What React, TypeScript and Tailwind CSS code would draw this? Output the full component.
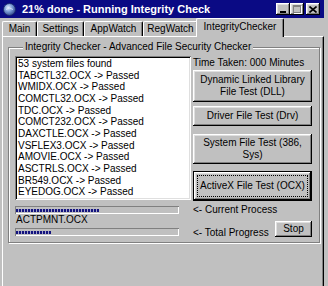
import React from "react";

const raised =
  "shadow-[inset_-1px_-1px_0_#000,inset_1px_1px_0_#fff,inset_-2px_-2px_0_#808080,inset_2px_2px_0_#dfdfdf]";

function TitleIcon() {
  return (
    <svg width="13" height="13" viewBox="0 0 13 13" className="shrink-0">
      <defs>
        <radialGradient id="g" cx="0.4" cy="0.35" r="0.7">
          <stop offset="0" stopColor="#e8f0ff" />
          <stop offset="0.45" stopColor="#7fa0d8" />
          <stop offset="1" stopColor="#2a3f8a" />
        </radialGradient>
      </defs>
      <circle cx="6.5" cy="6.5" r="6" fill="url(#g)" stroke="#1c2a66" strokeWidth="0.8" />
      <path d="M3 6.5 Q6.5 3.5 10 6.5" stroke="#dfe8ff" strokeWidth="0.8" fill="none" />
    </svg>
  );
}

function TitleBtn({ children }: { children: React.ReactNode }) {
  return (
    <div className={`flex h-[12px] w-[14px] items-center justify-center bg-[#c0c0c0] ${raised}`}>
      {children}
    </div>
  );
}

function Tab({ label, w }: { label: string; w: string }) {
  return (
    <div
      className={`flex h-[15px] ${w} items-center justify-center rounded-t-[2px] border-l border-t border-r border-l-white border-t-white border-r-black shadow-[inset_-1px_0_0_#808080] text-[10px] leading-none`}
    >
      {label}
    </div>
  );
}

function Progress({ fill }: { fill: string }) {
  return (
    <div className="flex h-[8px] w-[164px] items-center px-[1px] shadow-[inset_1px_1px_0_#808080,inset_-1px_-1px_0_#fff]">
      <div
        className={`h-[3px] ${fill} bg-[repeating-linear-gradient(90deg,#14147e_0_2px,#a4a4c8_2px_3px)]`}
      />
    </div>
  );
}

function Btn({ children, h }: { children: React.ReactNode; h: string }) {
  return (
    <div
      className={`flex ${h} w-[119px] items-center justify-center bg-[#c0c0c0] px-[6px] text-center text-[10px] leading-[12px] ${raised}`}
    >
      {children}
    </div>
  );
}

export default function App() {
  const files = [
    "53 system files found",
    "TABCTL32.OCX -> Passed",
    "WMIDX.OCX -> Passed",
    "COMCTL32.OCX -> Passed",
    "TDC.OCX -> Passed",
    "COMCT232.OCX -> Passed",
    "DAXCTLE.OCX -> Passed",
    "VSFLEX3.OCX -> Passed",
    "AMOVIE.OCX -> Passed",
    "ASCTRLS.OCX -> Passed",
    "BR549.OCX -> Passed",
    "EYEDOG.OCX -> Passed",
  ];
  return (
    <div className="h-[286px] w-[328px] overflow-hidden bg-[#c0c0c0] font-['Liberation_Sans',Arial,sans-serif] text-black">
      <div className="flex w-[324px] flex-col">
        {/* title bar */}
        <div className="flex h-[18px] items-center bg-[#0a0a84] pl-[3px] pr-[4px]">
          <TitleIcon />
          <span className="ml-[6px] text-[11px] font-bold leading-none text-white">
            21% done - Running Integrity Check
          </span>
          <div className="ml-auto flex items-center">
            <TitleBtn>
              <div className="mt-[5px] h-[2px] w-[6px] bg-black" />
            </TitleBtn>
            <TitleBtn>
              <div className="h-[8px] w-[8px] border border-t-2 border-[#808080] shadow-[1px_1px_0_#fff]" />
            </TitleBtn>
            <div className="w-[2px]" />
            <TitleBtn>
              <svg width="8" height="7" viewBox="0 0 8 7">
                <path d="M0.5 0.5 L7.5 6.5 M7.5 0.5 L0.5 6.5" stroke="#000" strokeWidth="1.6" />
              </svg>
            </TitleBtn>
          </div>
        </div>

        {/* tabs */}
        <div className="flex h-[18px] items-end pl-[2px]">
          <Tab label="Main" w="w-[35px]" />
          <Tab label="Settings" w="w-[47px]" />
          <Tab label="AppWatch" w="w-[59px]" />
          <Tab label="RegWatch" w="w-[55px]" />
          <div className="relative z-10 -mb-[1px] ml-[-2px] flex h-[19px] w-[88px] items-start justify-center rounded-t-[2px] border-l border-t border-r border-l-white border-t-white border-r-black bg-[#c0c0c0] pt-[3px] text-[10px] leading-none shadow-[inset_-1px_0_0_#808080]">
            IntegrityChecker
          </div>
        </div>

        {/* tab page */}
        <div className="ml-[2px] h-[262px] w-[322px] border-l border-t border-r border-b border-l-white border-t-white border-r-black border-b-black shadow-[inset_-1px_-1px_0_#808080]">
          <fieldset className="ml-[5px] mt-[4px] w-[312px] border border-[#808080] px-[6px] pb-[3px] pt-[3px] shadow-[inset_1px_1px_0_#fff,1px_1px_0_#fff]">
            <legend className="ml-[8px] bg-[#c0c0c0] px-[2px] text-[10px] leading-[12px]">
              Integrity Checker - Advanced File Security Checker
            </legend>
            <div className="flex">
              <div className="h-[144px] w-[176px] bg-white pl-[3px] pt-[2px] shadow-[inset_1px_1px_0_#808080,inset_-1px_-1px_0_#fff,inset_2px_2px_0_#000,inset_-2px_-2px_0_#dfdfdf]">
                {files.map((f) => (
                  <div key={f} className="text-[10px] leading-[11.67px] whitespace-nowrap">
                    {f}
                  </div>
                ))}
              </div>
              <div className="ml-[2px] flex flex-col">
                <div className="mt-[1px] text-[10px] leading-[12px] whitespace-nowrap">
                  Time Taken: 000 Minutes
                </div>
                <div className="mt-[1px]">
                  <Btn h="h-[32px]">
                    Dynamic Linked Library
                    <br />
                    File Test (DLL)
                  </Btn>
                </div>
                <div className="mt-[4px]">
                  <Btn h="h-[20px]">Driver File Test (Drv)</Btn>
                </div>
                <div className="mt-[8px]">
                  <Btn h="h-[30px]">
                    System File Test (386,
                    <br />
                    Sys)
                  </Btn>
                </div>
                <div className="mt-[7px] flex h-[30px] w-[119px] border border-black bg-[#c0c0c0] p-[3px] shadow-[inset_-1px_-1px_0_#000,inset_1px_1px_0_#fff,inset_-2px_-2px_0_#808080,inset_2px_2px_0_#dfdfdf]">
                  <div className="flex flex-1 items-center justify-center border border-dotted border-black text-[10px] leading-none">
                    ActiveX File Test (OCX)
                  </div>
                </div>
              </div>
            </div>

            <div className="flex">
              <div className="flex w-[164px] flex-col">
                <div className="mt-[5px]">
                  <Progress fill="w-[83px]" />
                </div>
                <div className="pl-[1px] text-[10px] leading-[12px]">ACTPMNT.OCX</div>
                <div className="mt-[2px]">
                  <Progress fill="w-[35px]" />
                </div>
              </div>
              <div className="ml-[14px] flex w-[119px] flex-col">
                <div className="mt-[3px] text-[10px] leading-[12px] whitespace-nowrap">
                  &lt;- Current Process
                </div>
                <div className="mt-[5px] flex items-start">
                  <div className="mt-[6px] text-[10px] leading-[12px] whitespace-nowrap">
                    &lt;- Total Progress
                  </div>
                  <div
                    className={`ml-auto flex h-[16px] w-[37px] items-center justify-center bg-[#c0c0c0] text-[10px] leading-none ${raised}`}
                  >
                    Stop
                  </div>
                </div>
              </div>
            </div>
          </fieldset>
        </div>
      </div>
    </div>
  );
}
